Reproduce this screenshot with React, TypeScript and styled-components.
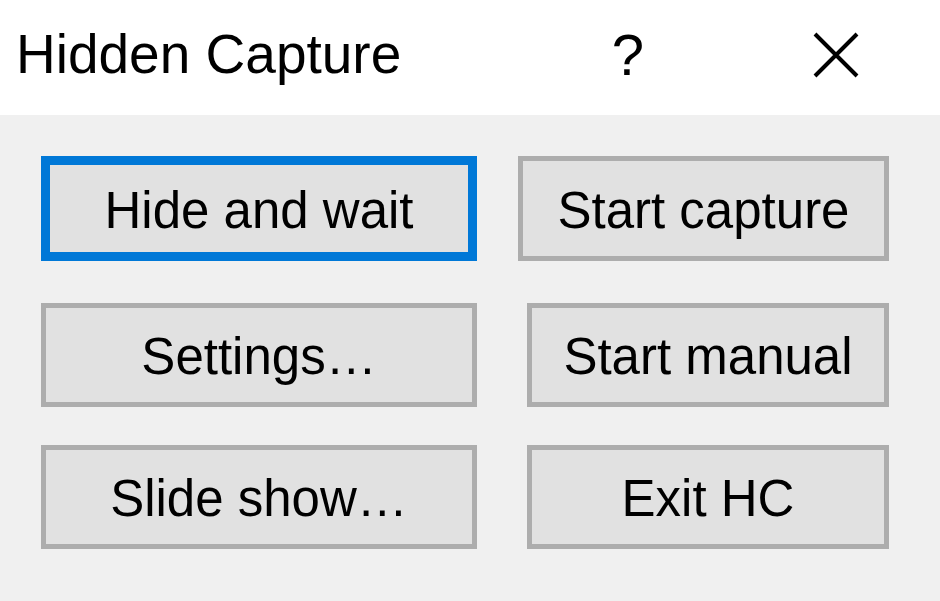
import React from 'react'
import styled, { createGlobalStyle } from 'styled-components'

const GlobalStyle = createGlobalStyle`
  html, body {
    margin: 0;
    padding: 0;
    width: 940px;
    height: 601px;
    overflow: hidden;
    background: #f0f0f0;
    font-family: "Liberation Sans", Arial, sans-serif;
  }
`

const Dialog = styled.div`
  width: 940px;
  height: 601px;
  display: flex;
  flex-direction: column;
  background: #f0f0f0;
`

const TitleBar = styled.header`
  height: 115px;
  background: #ffffff;
  display: flex;
  align-items: stretch;
`

const Title = styled.h1`
  flex: 1;
  margin: 0;
  padding: 23px 0 0 16px;
  font-size: 55px;
  line-height: 63px;
  font-weight: normal;
  color: #000000;
`

const CaptionButton = styled.button`
  width: 208px;
  height: 115px;
  padding: 0 0 6px 0;
  border: none;
  background: transparent;
  display: flex;
  align-items: center;
  justify-content: center;
  font-family: "Liberation Sans", Arial, sans-serif;
  font-size: 58px;
  line-height: 1;
  color: #000000;
  cursor: default;
`

const Body = styled.main`
  flex: 1;
  padding: 41px 0 0 41px;
  display: flex;
  flex-direction: column;
`

const Row = styled.div<{ $top: number; $height: number }>`
  display: grid;
  grid-template-columns: 436px 412px;
  height: ${p => p.$height}px;
  margin-top: ${p => p.$top}px;
`

const DialogButton = styled.button<{ $focused?: boolean; $width?: number }>`
  box-sizing: border-box;
  height: 100%;
  width: ${p => (p.$width ? `${p.$width}px` : '100%')};
  justify-self: end;
  background: #e1e1e1;
  border: ${p => (p.$focused ? '9px solid #0078d7' : '5px solid #adadad')};
  display: flex;
  align-items: center;
  justify-content: center;
  padding: 3px 0 0 0;
  font-family: "Liberation Sans", Arial, sans-serif;
  font-size: 51px;
  color: #000000;
  cursor: default;
`

const CloseIcon = () => (
  <svg width='46' height='46' viewBox='0 0 46 46'>
    <path d='M2 2 L44 44 M44 2 L2 44' stroke='#000' strokeWidth='4' fill='none' />
  </svg>
)

const App = () => (
  <Dialog>
    <GlobalStyle />
    <TitleBar>
      <Title>Hidden Capture</Title>
      <CaptionButton>?</CaptionButton>
      <CaptionButton><CloseIcon /></CaptionButton>
    </TitleBar>
    <Body>
      <Row $top={0} $height={105}>
        <DialogButton $focused>Hide and wait</DialogButton>
        <DialogButton $width={371}>Start capture</DialogButton>
      </Row>
      <Row $top={42} $height={104}>
        <DialogButton>Settings…</DialogButton>
        <DialogButton $width={362}>Start manual</DialogButton>
      </Row>
      <Row $top={38} $height={104}>
        <DialogButton>Slide show…</DialogButton>
        <DialogButton $width={362}>Exit HC</DialogButton>
      </Row>
    </Body>
  </Dialog>
)

export default App
